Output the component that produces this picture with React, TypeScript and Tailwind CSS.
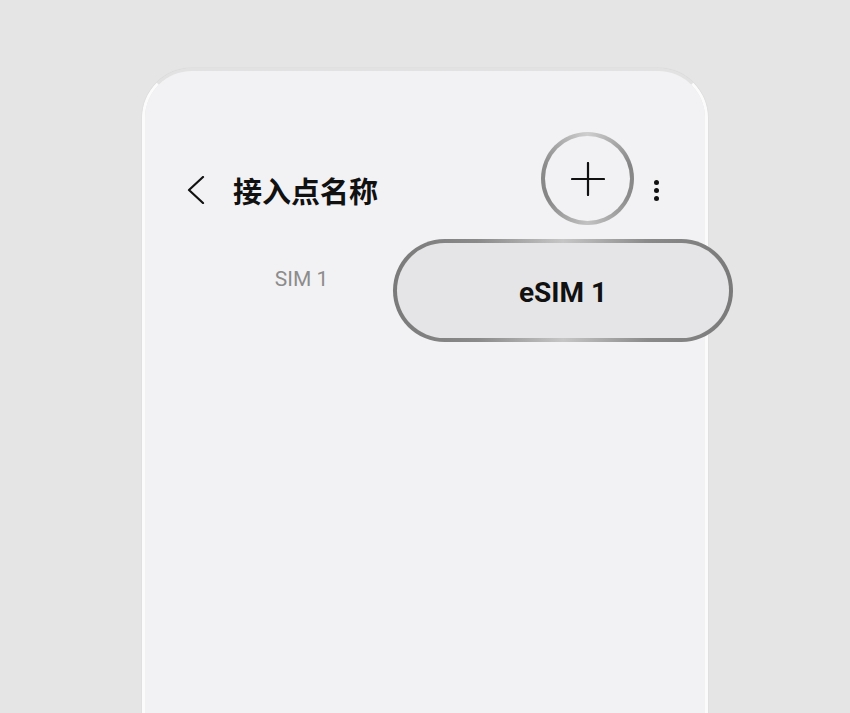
import React from 'react';

function BackChevron() {
  return (
    <svg width="18" height="28" viewBox="0 0 18 28" className="mt-[44px] shrink-0">
      <path d="M16 1 L2 14 L16 27" fill="none" stroke="#111" strokeWidth="2.2" strokeLinecap="round" strokeLinejoin="round" />
    </svg>
  );
}

function AddButton() {
  return (
    <div className="-ml-[2px] h-[93px] w-[93px] shrink-0 rounded-full bg-[conic-gradient(#cfcfcf,#858585_20%,#8c8c8c_32%,#c2c2c2_50%,#858585_68%,#8c8c8c_80%,#cfcfcf)] p-[4px]">
      <div className="flex h-full w-full items-center justify-center rounded-full bg-[#f2f2f4]">
        <svg width="34" height="34" viewBox="0 0 34 34">
          <path d="M17 1 V33 M1 17 H33" stroke="#111" strokeWidth="2.2" strokeLinecap="round" />
        </svg>
      </div>
    </div>
  );
}

function MoreDots() {
  return (
    <div className="mt-[48px] ml-[20px] flex flex-col items-center gap-[3px]">
      <span className="h-[5px] w-[5px] rounded-full bg-[#111]" />
      <span className="h-[5px] w-[5px] rounded-full bg-[#111]" />
      <span className="h-[5px] w-[5px] rounded-full bg-[#111]" />
    </div>
  );
}

export default function App() {
  return (
    <div className="h-[713px] w-[850px] overflow-hidden bg-[#e5e5e5] font-['Roboto','Noto_Sans_CJK_SC',sans-serif]">
      <div className="ml-[142px] mt-[68px] h-[700px] w-[566px] rounded-t-[50px] border-[3px] border-b-0 border-x-[#fbfbfb] border-t-[#e2e2e2] shadow-[0_0_1px_rgba(0,0,0,0.2)]">
        <div className="h-full w-full rounded-t-[47px] bg-[#f2f2f4]">
          <div className="flex pl-[42px] pr-[46px] pt-[61px]">
            <BackChevron />
            <h1 className="ml-[28px] mt-[42px] font-['Noto_Sans_CJK_SC',sans-serif] text-[29px] font-bold leading-[32px] tracking-[0px] text-[#111]">
              接入点名称
            </h1>
            <div className="ml-auto flex items-start">
              <AddButton />
              <MoreDots />
            </div>
          </div>

          <div className="mt-[14px] flex items-start pl-[65px]">
            <div className="mt-[26px] w-[183px] shrink-0 text-center text-[21px] leading-[28px] text-[#8c8c8c]">SIM 1</div>
            <div className="h-[103px] w-[340px] shrink-0 rounded-full bg-[linear-gradient(to_right,#7a7a7a_0%,#8a8a8a_25%,#c6c6c6_50%,#8a8a8a_75%,#7a7a7a_100%)] p-[4px]">
              <div className="flex h-full w-full items-center justify-center rounded-full bg-[#e5e5e7] pt-[4px]">
                <span className="font-['Roboto',sans-serif] text-[28px] font-bold text-[#111]">eSIM 1</span>
              </div>
            </div>
          </div>
        </div>
      </div>
    </div>
  );
}
